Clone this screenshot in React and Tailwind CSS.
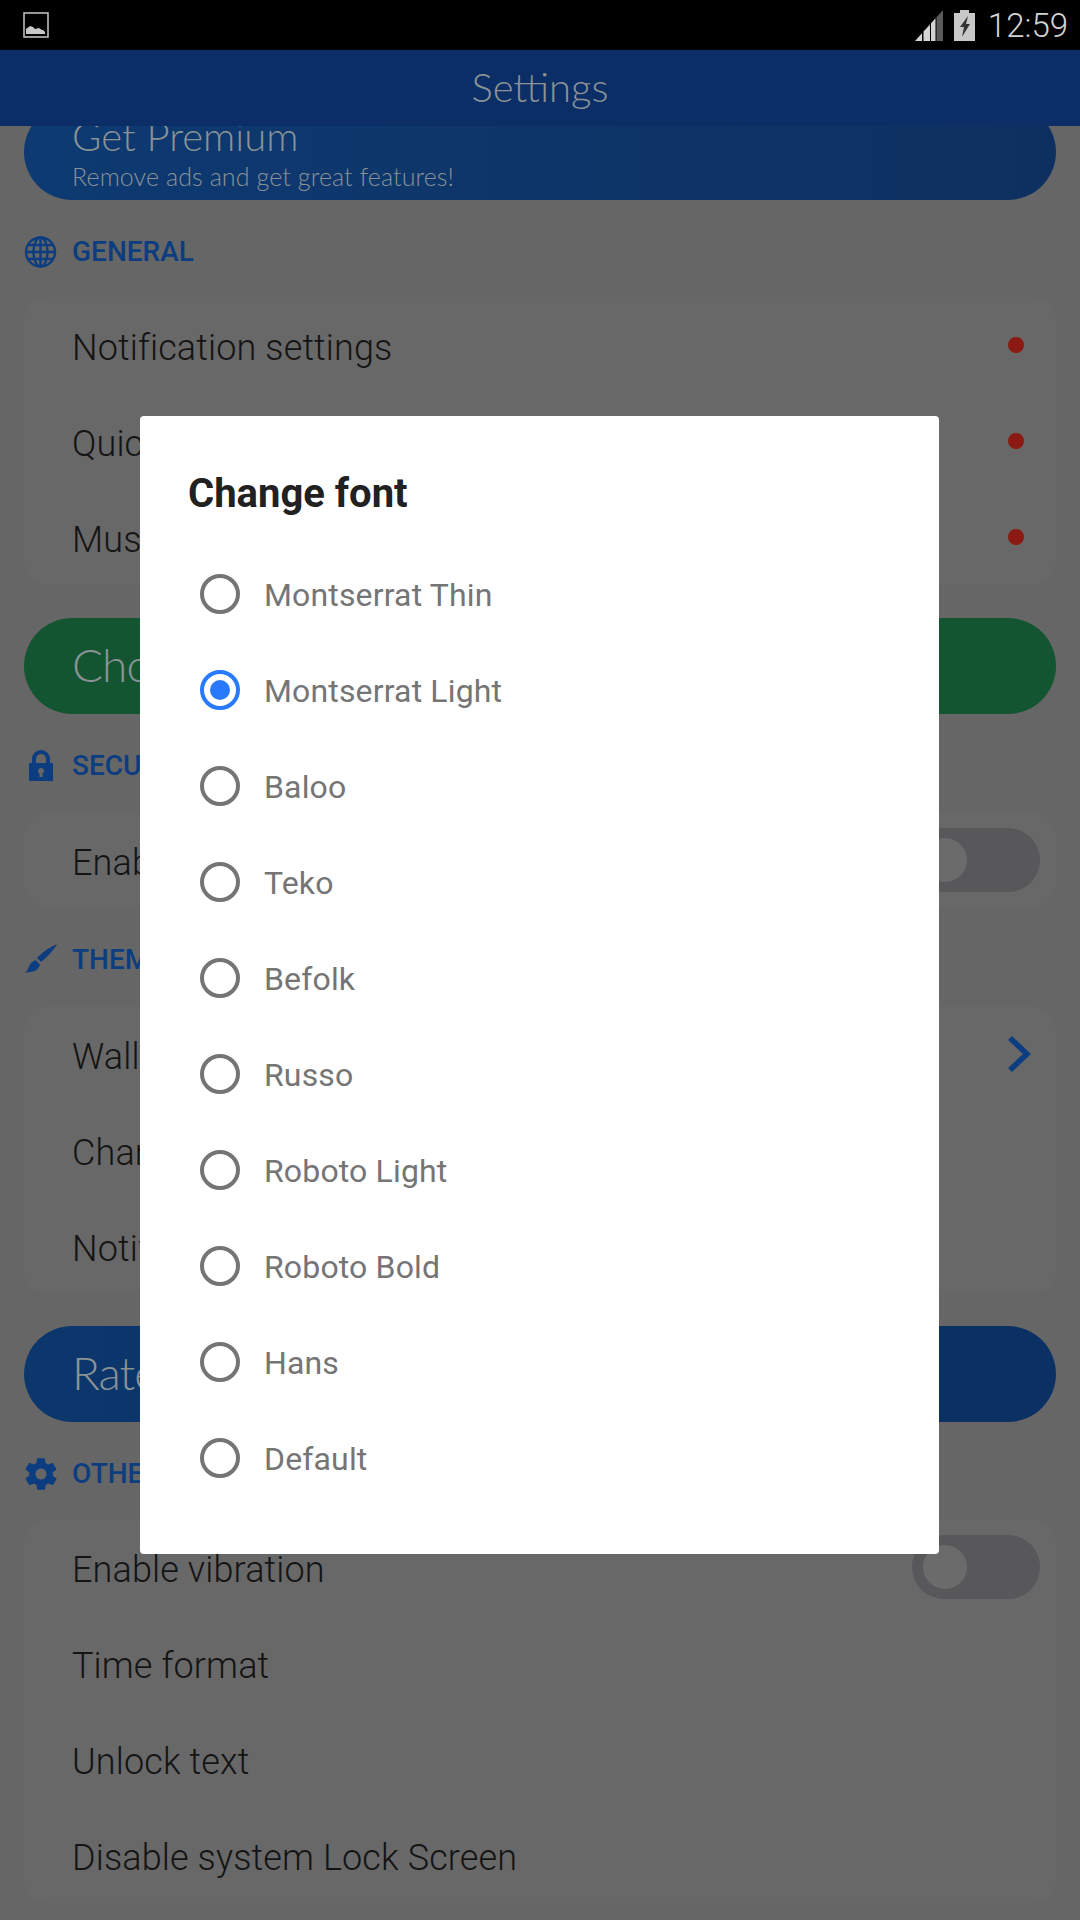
import React from 'react';

const fonts = ['Montserrat Thin', 'Montserrat Light', 'Baloo', 'Teko', 'Befolk', 'Russo', 'Roboto Light', 'Roboto Bold', 'Hans', 'Default'];

const GlobeIcon = () => (
  <svg width="34" height="34" viewBox="0 0 34 34" fill="none" stroke="#0c3d80" strokeWidth="2.4">
    <circle cx="16.500" cy="17" r="14.500" />
    <ellipse cx="16.500" cy="17" rx="7" ry="14.500" />
    <path d="M16.500 2.500v29M2 17h29M4 10h25M4 24h25" />
  </svg>
);

const LockIcon = () => (
  <svg width="34" height="34" viewBox="0 0 34 34">
    <path fill="#0c3d80" fillRule="evenodd" d="M5 14h3v-4a9 9 0 0 1 18 0v4h3v18H5zM12 14h10v-4a5 5 0 0 0-10 0zM17 19a3 3 0 0 0-1.500 5.600V28h3v-3.400A3 3 0 0 0 17 19z" />
  </svg>
);

const BrushIcon = () => (
  <svg width="34" height="34" viewBox="0 0 34 34">
    <path fill="#0c3d80" d="M33 1C26 4 17 10 13 15l4 4C23 14 30 7 33 1z" />
    <path fill="#0c3d80" d="M11.500 17l4.500 4.500c-1 5-6 8-15 8 3-2 3-4 4.500-7 1-2.500 3.500-4.500 6-5.500z" />
  </svg>
);

const GearIcon = () => (
  <svg width="38" height="38" viewBox="0 0 24 24" className="shrink-0">
    <path fill="#0c3d80" d="M19.400 13c.04-.33.1-.66.1-1s-.06-.67-.1-1l2.100-1.650c.2-.15.25-.42.12-.64l-2-3.460c-.12-.22-.4-.3-.6-.22l-2.500 1c-.52-.4-1.080-.73-1.700-.98l-.37-2.650A.5.5 0 0 0 14 2h-4a.5.5 0 0 0-.5.420L9.130 5.070c-.62.25-1.180.58-1.700.98l-2.500-1c-.22-.08-.48 0-.6.220l-2 3.460c-.13.22-.07.49.12.640L4.600 11c-.04.330-.1.660-.1 1s.06.670.1 1l-2.100 1.650c-.19.15-.25.42-.12.64l2 3.460c.12.22.38.300.6.220l2.500-1c.52.400 1.080.730 1.700.980l.37 2.650c.05.240.26.420.5.420h4c.24 0 .45-.18.5-.42l.37-2.650c.62-.25 1.180-.58 1.700-.98l2.500 1c.22.080.48 0 .6-.22l2-3.460c.13-.22.07-.49-.12-.64zM12 15.500a3.500 3.500 0 1 1 0-7 3.500 3.500 0 0 1 0 7z" />
  </svg>
);

const SectionHeader = ({ icon, title, className }) => (
  <div className={`flex items-center h-[46px] pl-[24px] gap-[14px] ${className}`}>
    <span className="w-[34px] h-[34px] flex items-center justify-center shrink-0">{icon}</span>
    <span className="text-[28px] font-medium text-[#0c3d80]">{title}</span>
  </div>
);

const Row = ({ label, right }) => (
  <div className="h-[96px] flex items-center justify-between pl-[48px] pr-[16px]">
    <span className="pt-[6px] text-[36px] font-light text-[#141414] tracking-[0.12px]">{label}</span>
    {right}
  </div>
);

const Dot = () => <span className="w-[16px] h-[16px] rounded-full bg-[#8c1a14] mr-[16px]" />;

const Toggle = () => (
  <div className="w-[128px] h-[64px] rounded-full bg-[#58585a] flex items-center pl-[11px]">
    <div className="w-[44px] h-[44px] rounded-full bg-[#6b6b6b]" />
  </div>
);

const Chevron = () => (
  <svg width="28" height="38" viewBox="0 0 28 38" fill="none" className="mr-[7px]" stroke="#0c3d80" strokeWidth="5.500">
    <path d="M5 3l17 16L5 35" />
  </svg>
);

const Card = ({ children }) => (
  <div className="mx-[24px] rounded-[24px] bg-[#686868]">{children}</div>
);

const Pill = ({ bg, label }) => (
  <div className={`mx-[24px] h-[96px] rounded-[48px] flex items-center pl-[48px] ${bg}`}>
    <span className="-mt-[4px] text-[46px] font-light font-['Lato',sans-serif] text-[#8a9296] tracking-[-1px]">{label}</span>
  </div>
);

export default function App() {
  return (
    <div className="relative w-[1080px] h-[1920px] overflow-hidden bg-[#666666] font-['Roboto',sans-serif]">
      <div className="relative z-10 h-[50px] bg-black flex items-center justify-between pl-[23px] pr-[12px]">
        <svg width="26" height="26" viewBox="0 0 26 26">
          <rect x="1" y="1" width="24" height="24" fill="none" stroke="#c8c8c8" strokeWidth="1.500" />
          <path fill="#c8c8c8" d="M3 22v-5l4-3 3 1 2 2 4-1 3 2h1l2 2v2z" />
        </svg>
        <div className="flex items-center">
          <svg width="28" height="31" viewBox="0 0 28 31">
            <path fill="#d4d4d4" d="M0 31l7-7.800V31zM8.500 21.600L15 14.400V31H8.500zM16 13.300l4.500-5V31H16z" />
            <path fill="#5a5a5a" d="M21.500 7.200L28 0v31h-6.500z" />
          </svg>
          <svg width="21" height="31" viewBox="0 0 21 31" className="ml-[11px]">
            <path fill="#c8c8c8" d="M6 0h9v3h6v28H0V3h6z" />
            <path fill="#333" d="M14 6L6 17h4L8 27l8-13h-4z" />
          </svg>
          <span className="ml-[13px] text-[33px] font-light text-[#d4d4d4] leading-none">12:59</span>
        </div>
      </div>

      <div className="relative z-10 h-[76px] bg-[#0c2e66] flex items-center justify-center">
        <span className="-mt-[2px] text-[40px] font-light font-['Lato',sans-serif] text-[#8a9296]">Settings</span>
      </div>

      <div className="mx-[24px] -mt-[22px] h-[96px] rounded-[48px] bg-gradient-to-r from-[#0d3a72] to-[#0e3060] pl-[48px] flex flex-col justify-end pb-[9px]">
        <span className="-mt-[2px] -translate-y-[2px] text-[40px] leading-[46px] font-light font-['Lato',sans-serif] text-[#8a9296]">Get Premium</span>
        <span className="text-[25px] leading-[30px] font-light font-['Lato',sans-serif] text-[#8a9296] tracking-[0.1px]">Remove ads and get great features!</span>
      </div>

      <SectionHeader icon={<GlobeIcon />} title="GENERAL" className="mt-[29px]" />
      <div className="mt-[22px]">
        <Card>
          <Row label="Notification settings" right={<Dot />} />
          <Row label="Quick settings" right={<Dot />} />
          <Row label="Music player" right={<Dot />} />
        </Card>
      </div>

      <div className="mt-[33px]">
        <Pill bg="bg-[#125530]" label="Choose" />
      </div>

      <SectionHeader icon={<LockIcon />} title="SECURITY" className="mt-[29px]" />
      <div className="mt-[23px]">
        <Card>
          <Row label="Enable lock" right={<Toggle />} />
        </Card>
      </div>

      <SectionHeader icon={<BrushIcon />} title="THEME" className="mt-[29px]" />
      <div className="mt-[23px]">
        <Card>
          <Row label="Wallpaper" right={<Chevron />} />
          <Row label="Change font" />
          <Row label="Notification color" />
        </Card>
      </div>

      <div className="mt-[32px]">
        <Pill bg="bg-gradient-to-r from-[#0c376c] to-[#0b3063]" label="Rate" />
      </div>

      <SectionHeader icon={<GearIcon />} title="OTHER" className="mt-[29px]" />
      <div className="mt-[22px]">
        <Card>
          <Row label="Enable vibration" right={<Toggle />} />
          <Row label="Time format" />
          <Row label="Unlock text" />
          <Row label="Disable system Lock Screen" />
        </Card>
      </div>

      {/* dialog */}
      <div className="absolute inset-x-0 top-[50px] bottom-0 z-20 flex items-center justify-center pr-[1px]">
        <div className="w-[799px] h-[1138px] bg-white rounded-[4px] pt-[50px] pl-[48px]">
          <h2 className="text-[40px] leading-[56px] font-bold text-[#212121]">Change font</h2>
          <div className="mt-[24px] flex flex-col">
            {fonts.map((name, i) => (
              <div key={name} className="h-[96px] flex items-center pl-[12px]">
                {i === 1 ? (
                  <div className="w-[40px] h-[40px] rounded-full border-[4px] border-[#2979ff] flex items-center justify-center">
                    <div className="w-[20px] h-[20px] rounded-full bg-[#2979ff]" />
                  </div>
                ) : (
                  <div className="w-[40px] h-[40px] rounded-full border-[4px] border-[#757575]" />
                )}
                <span className="ml-[24px] pt-[2px] text-[32px] text-[#757575] tracking-[0.15px]">{name}</span>
              </div>
            ))}
          </div>
        </div>
      </div>
    </div>
  );
}
